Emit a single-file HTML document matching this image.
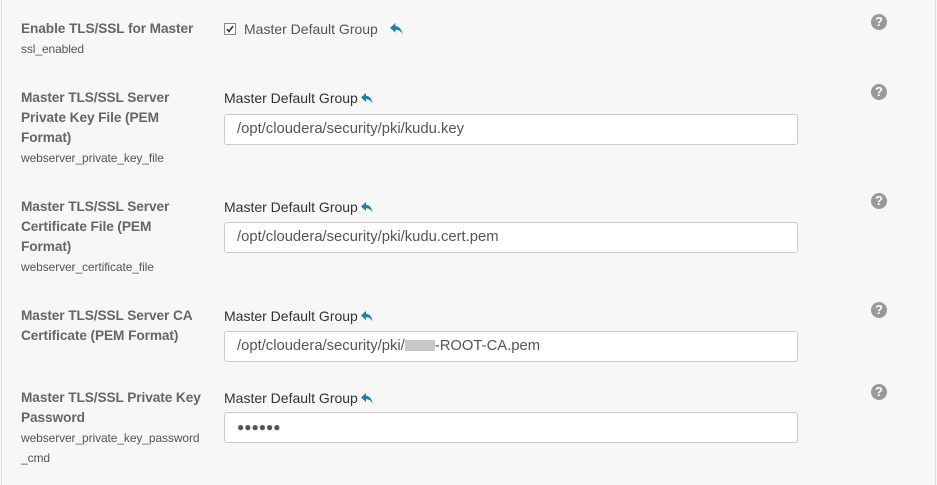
<!DOCTYPE html>
<html><head><style>
body{margin:0;width:937px;height:485px;background:#f7f7f7;font-family:"Liberation Sans",sans-serif;position:relative;overflow:hidden}
.bl{position:absolute;left:1px;top:0;width:1px;height:485px;background:#ddd}
.br{position:absolute;left:935px;top:0;width:1px;height:485px;background:#ddd}
.lab{position:absolute;left:21px;width:182px;font-weight:bold;font-size:13.7px;line-height:20px;color:#666;letter-spacing:-0.1px}
.lab small{display:block;font-weight:normal;font-size:12px;color:#555;line-height:20px;letter-spacing:-0.1px}
.grp{position:absolute;left:224px;font-size:14px;color:#333;line-height:16px;letter-spacing:0}
.inp{position:absolute;left:224px;width:574px;height:31px;background:#fff;border:1px solid #ccc;border-radius:3px;box-sizing:border-box;font-size:14.8px;color:#555;line-height:29px;padding-left:12px;letter-spacing:0}
.help{position:absolute;left:871px;width:16px;height:16px;border-radius:50%;background:#999;color:#fff;font-weight:bold;font-size:13px;line-height:16px;text-align:center}
.arr{display:inline-block;vertical-align:-1px;margin-left:3px}
</style></head><body>
<div class="bl"></div><div class="br"></div>
<svg width="0" height="0" style="position:absolute"><defs><symbol id="u" viewBox="0 0 12 11"><path d="M5 0L0 4.5 5 9V6.2C8 6.2 10 7.5 11.5 10.5 11 6.5 9 3.2 5 2.8Z" fill="#1f7fb0"/></symbol></defs></svg>

<div class="lab" style="top:19px">Enable TLS/SSL for Master<small>ssl_enabled</small></div>
<div style="position:absolute;left:224px;top:23px;width:12px;height:12px;border:1px solid #888;background:#fff;box-sizing:border-box"><svg width="10" height="10" viewBox="0 0 10 10" style="position:absolute;left:0;top:0"><path d="M2 5L4 7.5 8 2" stroke="#336" stroke-width="1.6" fill="none"/></svg></div>
<div class="grp" style="left:244px;top:21px;font-size:14px;color:#555">Master Default Group <svg class="arr" width="13" height="12" style="margin-left:8px"><use href="#u"/></svg></div>
<div class="help" style="top:14px">?</div>

<div class="lab" style="top:88px">Master TLS/SSL Server Private Key File (PEM Format)<small>webserver_private_key_file</small></div>
<div class="grp" style="top:90px">Master Default Group<svg class="arr" width="12" height="11"><use href="#u"/></svg></div>
<div class="inp" style="top:114px">/opt/cloudera/security/pki/kudu.key</div>
<div class="help" style="top:84px">?</div>

<div class="lab" style="top:197px">Master TLS/SSL Server Certificate File (PEM Format)<small>webserver_certificate_file</small></div>
<div class="grp" style="top:199px">Master Default Group<svg class="arr" width="12" height="11"><use href="#u"/></svg></div>
<div class="inp" style="top:222px">/opt/cloudera/security/pki/kudu.cert.pem</div>
<div class="help" style="top:193px">?</div>

<div class="lab" style="top:306px">Master TLS/SSL Server CA Certificate (PEM Format)</div>
<div class="grp" style="top:308px">Master Default Group<svg class="arr" width="12" height="11"><use href="#u"/></svg></div>
<div class="inp" style="top:331px">/opt/cloudera/security/pki/<span style="display:inline-block;width:30px;height:11px;background:#c8c8c8;vertical-align:-1px"></span>-ROOT-CA.pem</div>
<div class="help" style="top:302px">?</div>

<div class="lab" style="top:388px">Master TLS/SSL Private Key Password<small>webserver_private_key_password<br>_cmd</small></div>
<div class="grp" style="top:390px">Master Default Group<svg class="arr" width="12" height="11"><use href="#u"/></svg></div>
<div class="inp" style="top:412px;font-size:12px;color:#555">●●●●●●</div>
<div class="help" style="top:384px">?</div>
</body></html>
